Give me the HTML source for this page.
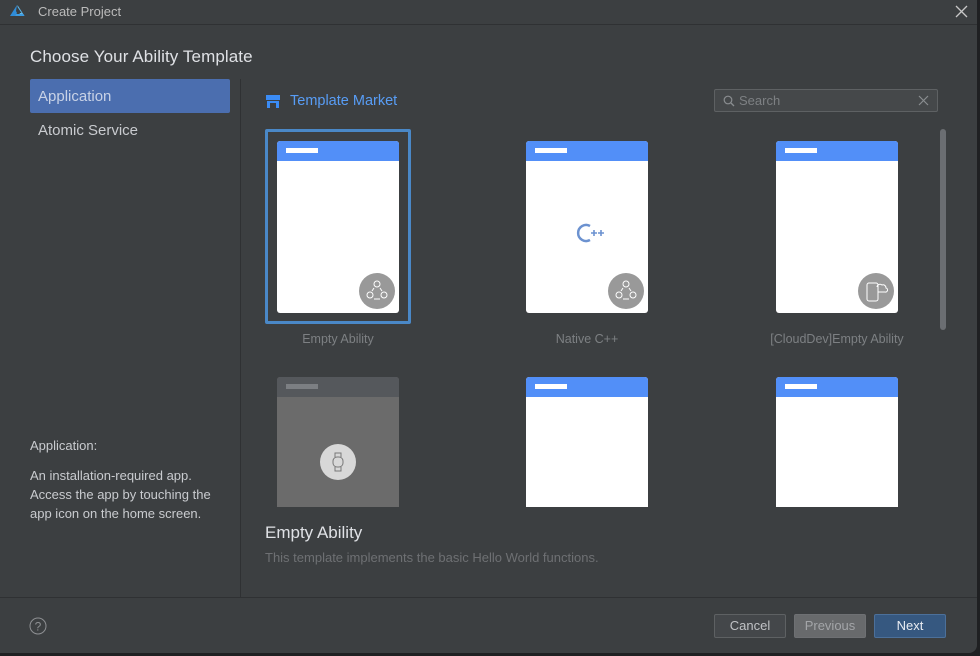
<!DOCTYPE html>
<html><head><meta charset="utf-8"><style>
*{margin:0;padding:0;box-sizing:border-box}
body{width:980px;height:656px;background:#1f2022;font-family:"Liberation Sans","Noto Sans CJK SC",sans-serif;overflow:hidden;position:relative}
.win{position:absolute;left:0;top:0;width:977px;height:653px;background:#3c3f41;border-bottom-right-radius:8px;overflow:hidden}
.abs{position:absolute}
.tb{left:0;top:0;width:977px;height:25px;border-bottom:1px solid #2f3133;color:#bbbbbb;font-size:13px}
.card{position:absolute;width:122px;height:172px;background:#fff;border-radius:3px;overflow:hidden}
.card .hd{height:20px;background:#528ff8}
.card .hd i{position:absolute;left:9px;top:7px;width:32px;height:5px;background:#fff}
.lbl{position:absolute;width:180px;text-align:center;color:#7d8083;font-size:12.5px}
.badge{position:absolute;right:4px;bottom:4px;width:36px;height:36px;border-radius:50%;background:#999}
.btn{position:absolute;top:614px;width:72px;height:24px;border-radius:2px;font-size:13px;text-align:center;line-height:22px}
</style></head><body><div class="win">
<div class="abs tb">
<svg class="abs" style="left:9px;top:4px" width="17" height="14" viewBox="0 0 17 14"><path d="M8 1L1 12h5l2-3-1-2z" fill="#2f8cd8"/><path d="M8.5 1l7 11H9l2-3h1.5L8.5 3z" fill="#5fb7e8"/><path d="M6 12h9.5l-1-2H7z" fill="#3d9be0"/></svg>
<span class="abs" style="left:38px;top:4px">Create Project</span>
<svg class="abs" style="left:955px;top:5px" width="13" height="13"><path d="M1 1L12 12M12 1L1 12" stroke="#c8c8c8" stroke-width="1.3"/></svg>
</div>
<div class="abs" style="left:30px;top:47px;color:#dfe1e5;font-size:17px;letter-spacing:0.1px">Choose Your Ability Template</div>
<div class="abs" style="left:30px;top:79px;width:200px;height:34px;background:#4b6eaf;border-radius:2px;color:#c8d2e6;font-size:15px;padding:9px 0 0 8px">Application</div>
<div class="abs" style="left:38px;top:122px;color:#c9cbcf;font-size:15px">Atomic Service</div>
<div class="abs" style="left:30px;top:438px;color:#c9cbcf;font-size:13px">Application:</div>
<div class="abs" style="left:30px;top:466px;color:#c9cbcf;font-size:13px;line-height:19px;width:200px">An installation-required app.<br>Access the app by touching the<br>app icon on the home screen.</div>
<div class="abs" style="left:240px;top:79px;width:1px;height:518px;background:#2f3133"></div>
<div class="abs" style="left:0;top:597px;width:977px;height:1px;background:#2f3133"></div>
<svg class="abs" style="left:266px;top:95px" width="14" height="13" viewBox="0 0 14 13"><rect x="0" y="0" width="14" height="5" fill="#3b8cf5"/><rect x="1" y="6" width="12" height="7" fill="#3b8cf5"/><rect x="4" y="8" width="6" height="5" fill="#3c3f41"/></svg>
<div class="abs" style="left:290px;top:93px;color:#589df6;font-size:14.5px">Template Market</div>
<div class="abs" style="left:714px;top:89px;width:224px;height:23px;border:1px solid #5e6163;background:#45484a;border-radius:2px"></div>
<svg class="abs" style="left:723px;top:95px" width="12" height="12"><circle cx="5" cy="5" r="3.8" stroke="#8a8d90" fill="none" stroke-width="1.2"/><path d="M8 8l3 3" stroke="#8a8d90" stroke-width="1.3"/></svg>
<div class="abs" style="left:739px;top:93px;color:#7d8083;font-size:13px">Search</div>
<svg class="abs" style="left:918px;top:95px" width="11" height="11"><path d="M1 1l9 9M10 1l-9 9" stroke="#8a8d90" stroke-width="1.2"/></svg>
<div class="abs" style="left:265px;top:129px;width:146px;height:195px;border:3px solid #4a88c7;border-radius:2px"></div>
<div class="card" style="left:277px;top:141px"><div class="hd"><i></i></div><div class="badge"><svg width="36" height="36"><g stroke="#fff" fill="none" stroke-width="1"><circle cx="18" cy="11" r="3"/><circle cx="11" cy="22" r="3"/><circle cx="25" cy="22" r="3"/><path d="M15 15l-2 3M21 15l2 3M15 26h6"/></g></svg></div></div>
<div class="lbl" style="left:248px;top:332px">Empty Ability</div>
<div class="card" style="left:526px;top:141px"><div class="hd"><i></i></div>
<svg class="abs" style="left:46px;top:80px" width="36" height="24"><path d="M18 5a8 8 0 1 0 0 14" stroke="#6c92d0" stroke-width="2.5" fill="none"/><path d="M19 12h6M22 9v6M26 12h6M29 9v6" stroke="#6c92d0" stroke-width="1.6"/></svg>
<div class="badge"><svg width="36" height="36"><g stroke="#fff" fill="none" stroke-width="1"><circle cx="18" cy="11" r="3"/><circle cx="11" cy="22" r="3"/><circle cx="25" cy="22" r="3"/><path d="M15 15l-2 3M21 15l2 3M15 26h6"/></g></svg></div></div>
<div class="lbl" style="left:497px;top:332px">Native C++</div>
<div class="card" style="left:776px;top:141px"><div class="hd"><i></i></div><div class="badge"><svg width="36" height="36"><g stroke="#fff" fill="none" stroke-width="1"><rect x="9" y="10" width="11" height="18" rx="2"/><path d="M19 14a3 3 0 0 1 5-2a3 3 0 0 1 4 3a2 2 0 0 1-1 4h-7"/></g></svg></div></div>
<div class="lbl" style="left:747px;top:332px">[CloudDev]Empty Ability</div>
<div class="card" style="left:277px;top:377px;background:#6b6b6b;border-radius:3px 3px 0 0"><div class="hd" style="background:#55585c"><i style="background:#7c7f83"></i></div>
<div class="abs" style="left:43px;top:67px;width:36px;height:36px;border-radius:50%;background:#d8d8d8"><svg width="36" height="36"><g stroke="#777" fill="none" stroke-width="1"><rect x="13" y="13" width="10" height="10" rx="4"/><path d="M15 13v-4h6v4M15 23v4h6v-4"/></g></svg></div></div>
<div class="card" style="left:526px;top:377px;border-radius:3px 3px 0 0"><div class="hd"><i></i></div></div>
<div class="card" style="left:776px;top:377px;border-radius:3px 3px 0 0"><div class="hd"><i></i></div></div>
<div class="abs" style="left:241px;top:507px;width:700px;height:90px;background:#3c3f41"></div>
<div class="abs" style="left:265px;top:523px;color:#dfe1e5;font-size:17px">Empty Ability</div>
<div class="abs" style="left:265px;top:550px;color:#6e7073;font-size:13px">This template implements the basic Hello World functions.</div>
<div class="abs" style="left:940px;top:129px;width:6px;height:201px;background:#6b6e72;border-radius:3px"></div>
<svg class="abs" style="left:29px;top:617px" width="18" height="18"><circle cx="9" cy="9" r="8" stroke="#8e9093" fill="none"/><text x="9" y="13.5" font-size="12" text-anchor="middle" fill="#8e9093" font-family="Liberation Sans">?</text></svg>
<div class="btn" style="left:714px;background:#44474a;border:1px solid #5e6163;color:#c0c2c5">Cancel</div>
<div class="btn" style="left:794px;background:#686a6c;border:1px solid #6e7073;color:#a3a5a8">Previous</div>
<div class="btn" style="left:874px;background:#365880;border:1px solid #4c709a;color:#e8ecf2">Next</div>
</div></body></html>
